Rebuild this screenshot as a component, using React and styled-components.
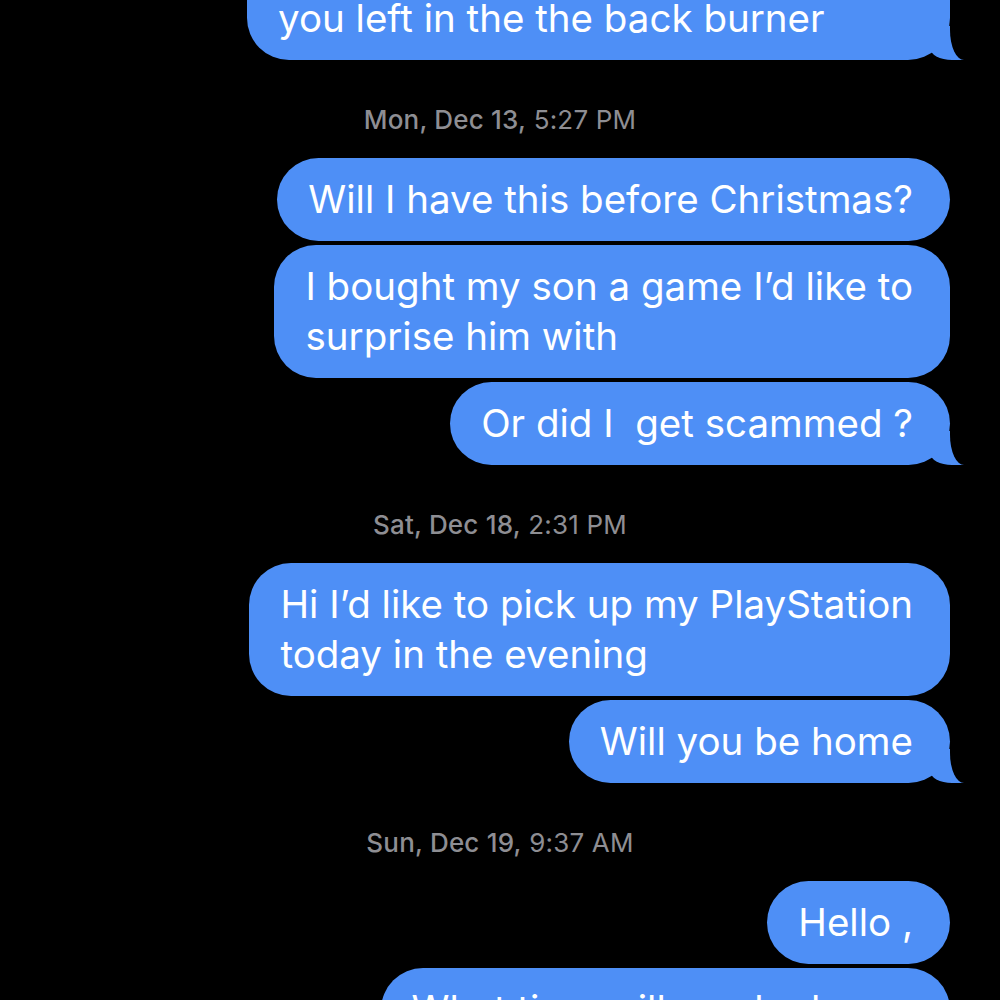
import React from "react";
import styled, { createGlobalStyle, css } from "styled-components";

const Global = createGlobalStyle`
  html, body { margin: 0; padding: 0; background: #000; }
  body { font-family: Inter, "Noto Sans", "Liberation Sans", sans-serif; -webkit-font-smoothing: antialiased; }
`;

const BLUE = "#4e8ff6";

const Screen = styled.div`
  width: 1000px;
  height: 1000px;
  overflow: hidden;
  background: #000;
`;

const Thread = styled.div`
  display: flex;
  flex-direction: column;
  align-items: flex-end;
  padding: 0 50px 0 0;
  margin-top: -77px;
`;

const Stamp = styled.div`
  align-self: stretch;
  padding-left: 50px;
  text-align: center;
  font-size: 26px;
  line-height: 30px;
  color: #8e8e93;
  margin: 45px 0 23px;
  letter-spacing: 0.2px;
  b { font-weight: 500; }
`;

const Bubble = styled.div`
  position: relative;
  background: ${BLUE};
  color: #fff;
  font-size: 38.5px;
  line-height: 50px;
  letter-spacing: 0;
  padding: 16px 37px 17px 31px;
  border-radius: 42px;
  white-space: nowrap;
  & + & { margin-top: 4px; }
  ${(p) => p.$clipped && css`padding-top: 70px; min-width: 635px;`}
  ${(p) =>
    p.$tail &&
    css`
      &::before {
        content: "";
        position: absolute;
        bottom: 0;
        right: -14px;
        width: 34px;
        height: 34px;
        background: ${BLUE};
        border-bottom-left-radius: 22px 12px;
      }
      &::after {
        content: "";
        position: absolute;
        bottom: 0;
        right: -40px;
        width: 40px;
        height: 36px;
        background: #000;
        border-bottom-left-radius: 14px 30px;
      }
    `}
`;

const Stamped = ({ day, time }) => (
  <Stamp>
    <b>{day}</b> {time}
  </Stamp>
);

export default function App() {
  return (
    <Screen>
      <Global />
      <Thread>
        <Bubble $tail $clipped>you left in the the back burner</Bubble>
        <Stamped day="Mon, Dec 13," time="5:27 PM" />
        <Bubble>Will I have this before Christmas?</Bubble>
        <Bubble>
          I bought my son a game I’d like to
          <br />
          surprise him with
        </Bubble>
        <Bubble $tail>Or did I&nbsp; get scammed ?</Bubble>
        <Stamped day="Sat, Dec 18," time="2:31 PM" />
        <Bubble>
          Hi I’d like to pick up my PlayStation
          <br />
          today in the evening
        </Bubble>
        <Bubble $tail>Will you be home</Bubble>
        <Stamped day="Sun, Dec 19," time="9:37 AM" />
        <Bubble>Hello ,</Bubble>
        <Bubble>
          What time will you be home
          <br />
          today
        </Bubble>
      </Thread>
    </Screen>
  );
}
